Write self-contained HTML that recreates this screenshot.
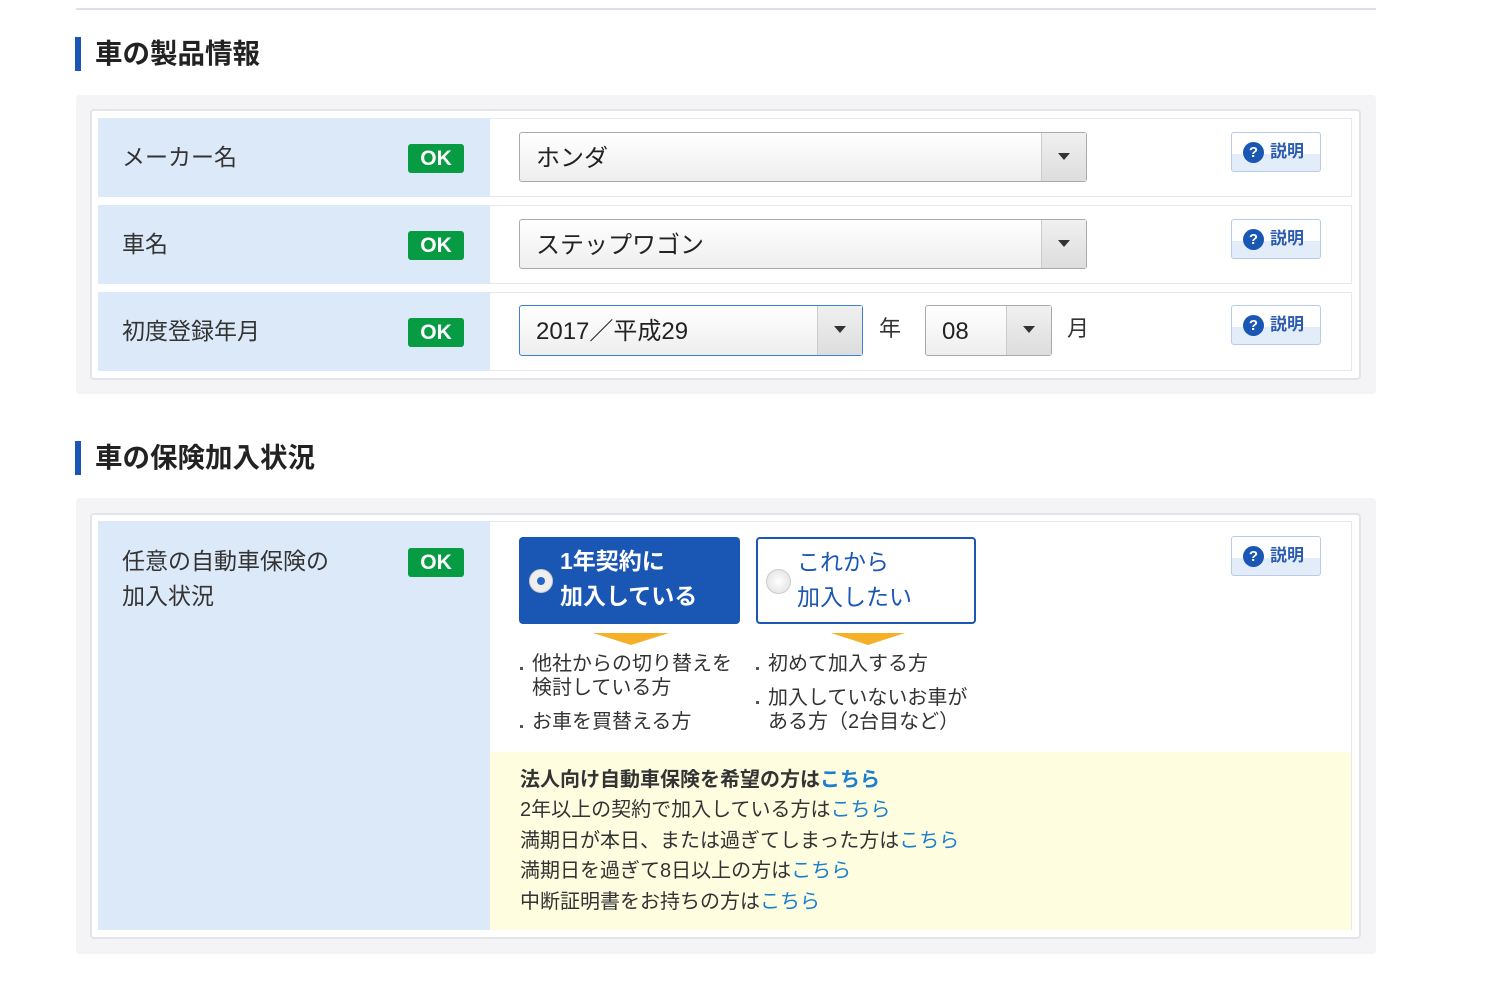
<!DOCTYPE html>
<html><head><meta charset="utf-8"><style>
*{margin:0;padding:0;box-sizing:border-box}
body{width:1500px;height:1000px;background:#fff;position:relative;overflow:hidden;font-family:"Liberation Sans","Noto Sans CJK JP",sans-serif;color:#333}
.a{position:absolute}
.h{font-size:27.5px;font-weight:bold;color:#222;border-left:6px solid #1a56b4;padding-left:14px;line-height:34px}
.panel{background:#f4f4f6;border-radius:4px}
.inner{background:#fff;border:2px solid #e2e4ea;border-radius:4px}
.lab{background:#dce9f9;font-size:23px;color:#333}
.cell{background:#fff;border:1px solid #e6e8ee;border-left:none}
.ok{background:#079b43;color:#fff;font-size:21px;font-weight:bold;border-radius:3px;width:56px;height:29px;line-height:29px;text-align:center}
.sel{border:1px solid #aaa;border-radius:3px;background:linear-gradient(#fff,#eee);font-size:24px;line-height:52px;padding-left:16px;color:#222}
.sel .ar{position:absolute;right:0;top:0;bottom:0;width:45px;border-left:1px solid #ccc;background:linear-gradient(#f0f0f0,#ddd)}
.sel .ar:after{content:"";position:absolute;left:16px;top:20px;border-left:6px solid transparent;border-right:6px solid transparent;border-top:7px solid #333}
.ex{width:90px;height:40px;border:1px solid #b9cbe6;border-radius:3px;background:linear-gradient(#fff 55%,#e3edfa 55%);font-size:17px;font-weight:bold;color:#2b5cb0;line-height:38px;padding-left:38px}
.ex:before{content:"?";position:absolute;left:11px;top:9px;width:21px;height:21px;border-radius:50%;background:#1a56b4;color:#fff;font-size:15px;line-height:21px;text-align:center}
.t{font-size:21px;color:#333;line-height:24px}
.k{color:#1a7fd0}
.li{position:absolute;font-size:20px;line-height:24px;color:#333;padding-left:13px}
.li:before{content:"";position:absolute;left:1px;top:15px;width:3px;height:3px;background:#555}
</style></head><body>
<div class="a" style="left:76px;top:8px;width:1300px;height:2px;background:#dde0e6"></div>
<div class="a h" style="left:75px;top:37px">車の製品情報</div>
<div class="a panel" style="left:76px;top:95px;width:1300px;height:299px"></div>
<div class="a inner" style="left:90px;top:109px;width:1271px;height:271px"></div>

<div class="a lab" style="left:98px;top:118px;width:392px;height:79px"><span class="a" style="left:24px;top:20px">メーカー名</span><div class="a ok" style="left:310px;top:26px">OK</div></div>
<div class="a cell" style="left:490px;top:118px;width:862px;height:79px"></div>
<div class="a sel" style="left:519px;top:132px;width:568px;height:50px">ホンダ<div class="ar"></div></div>
<div class="a ex" style="left:1231px;top:132px">説明</div>

<div class="a lab" style="left:98px;top:205px;width:392px;height:79px"><span class="a" style="left:24px;top:20px">車名</span><div class="a ok" style="left:310px;top:26px">OK</div></div>
<div class="a cell" style="left:490px;top:205px;width:862px;height:79px"></div>
<div class="a sel" style="left:519px;top:219px;width:568px;height:50px">ステップワゴン<div class="ar"></div></div>
<div class="a ex" style="left:1231px;top:219px">説明</div>

<div class="a lab" style="left:98px;top:292px;width:392px;height:79px"><span class="a" style="left:24px;top:20px">初度登録年月</span><div class="a ok" style="left:310px;top:26px">OK</div></div>
<div class="a cell" style="left:490px;top:292px;width:862px;height:79px"></div>
<div class="a sel" style="left:519px;top:305px;width:344px;height:51px;border-color:#3b7fd6">2017／平成29<div class="ar"></div></div>
<div class="a t" style="left:879px;top:317px;font-size:22px">年</div>
<div class="a sel" style="left:925px;top:305px;width:127px;height:51px">08<div class="ar"></div></div>
<div class="a t" style="left:1067px;top:317px;font-size:22px">月</div>
<div class="a ex" style="left:1231px;top:305px">説明</div>

<div class="a h" style="left:75px;top:441px">車の保険加入状況</div>
<div class="a panel" style="left:76px;top:498px;width:1300px;height:456px"></div>
<div class="a inner" style="left:90px;top:513px;width:1271px;height:426px"></div>
<div class="a lab" style="left:98px;top:521px;width:392px;height:409px"><span class="a" style="left:24px;top:23px;line-height:35px">任意の自動車保険の<br>加入状況</span><div class="a ok" style="left:310px;top:27px">OK</div></div>
<div class="a cell" style="left:490px;top:521px;width:862px;height:409px"></div>
<div class="a" style="left:490px;top:752px;width:861px;height:178px;background:#fefde0"></div>

<div class="a" style="left:519px;top:537px;width:221px;height:87px;background:#1a56b4;border-radius:4px;color:#fff;font-size:23px;font-weight:bold;line-height:35px;padding:7px 0 0 41px">1年契約に<br>加入している
<div class="a" style="left:10px;top:32px;width:24px;height:24px;border-radius:50%;background:#eee;border:1px solid #ccc"><div class="a" style="left:7px;top:7px;width:8px;height:8px;border-radius:50%;background:#2563c4"></div></div></div>
<div class="a" style="left:756px;top:537px;width:220px;height:87px;background:#fff;border:2px solid #1a56b4;border-radius:4px;color:#1a56b4;font-size:23px;line-height:35px;padding:6px 0 0 39px">これから<br>加入したい
<div class="a" style="left:8px;top:30px;width:25px;height:25px;border-radius:50%;background:radial-gradient(#fff,#ddd);border:1px solid #ccc"></div></div>
<div class="a" style="left:593px;top:633px;border-left:38px solid transparent;border-right:38px solid transparent;border-top:12px solid #f5b027"></div>
<div class="a" style="left:831px;top:633px;border-left:37px solid transparent;border-right:37px solid transparent;border-top:12px solid #f5b027"></div>
<div class="li" style="left:519px;top:652px">他社からの切り替えを<br>検討している方</div>
<div class="li" style="left:519px;top:710px">お車を買替える方</div>
<div class="li" style="left:755px;top:652px">初めて加入する方</div>
<div class="li" style="left:755px;top:686px">加入していないお車が<br>ある方（2台目など）</div>
<div class="a ex" style="left:1231px;top:536px">説明</div>

<div class="a t" style="left:520px;top:765px;line-height:30.4px;font-size:20px"><b>法人向け自動車保険を希望の方は<span class="k">こちら</span></b><br>2年以上の契約で加入している方は<span class="k">こちら</span><br>満期日が本日、または過ぎてしまった方は<span class="k">こちら</span><br>満期日を過ぎて8日以上の方は<span class="k">こちら</span><br>中断証明書をお持ちの方は<span class="k">こちら</span></div>
</body></html>
